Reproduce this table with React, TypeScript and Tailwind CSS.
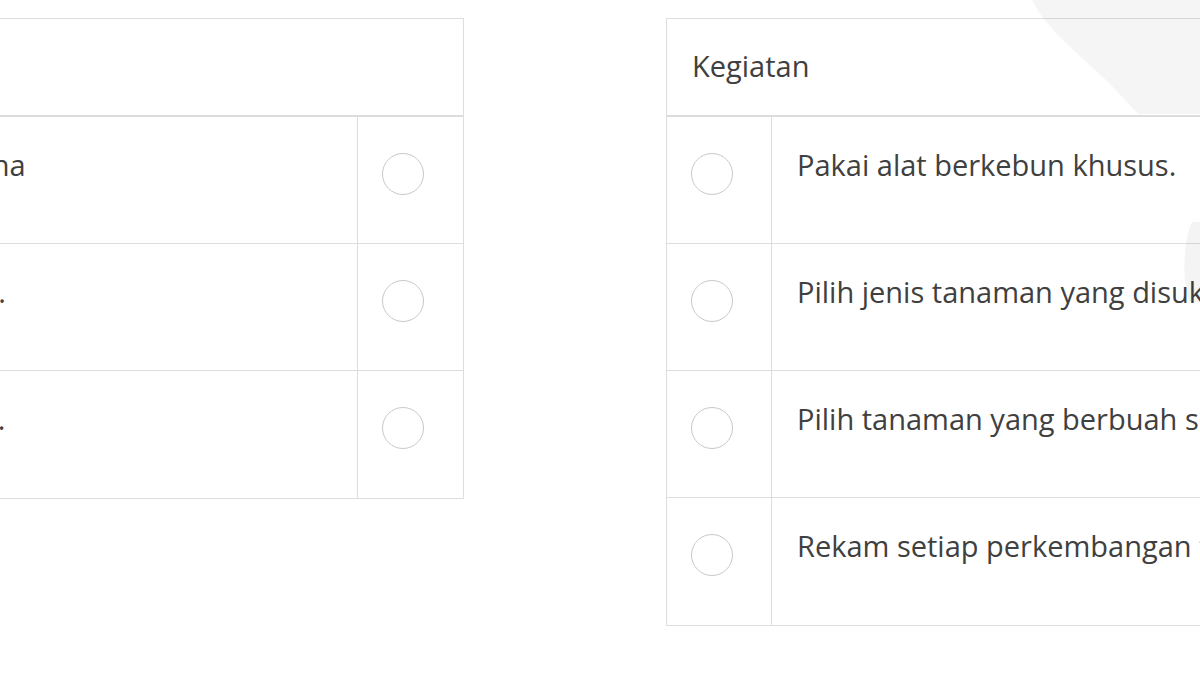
import React from "react";

const leftRows = ["Pot bunga berwarna", "Tanah yang sesuai.", "Pupuk yang cukup."];

const rightRows = [
  "Pakai alat berkebun khusus.",
  "Pilih jenis tanaman yang disukai.",
  "Pilih tanaman yang berbuah sepanjang tahun.",
  "Rekam setiap perkembangan tanaman.",
];

const Radio = () => (
  <span className="block w-[42px] h-[42px] rounded-full border-[1.5px] border-[#c9c9c9] bg-white" />
);

const LeftTable = () => (
  <div className="ml-[-276px] w-[740px] shrink-0 border border-[#dedede] self-start">
    <div className="h-[98px] border-b-2 border-[#dcdcdc] pl-[25px] pt-[26px]">Pilihan</div>
    {leftRows.map((text, i) => (
      <div
        key={i}
        className={`flex h-[127px] ${i < leftRows.length - 1 ? "border-b border-[#dedede]" : ""}`}
      >
        <div className="flex-1 border-r border-[#dedede] pl-[25px] pt-[27px] whitespace-nowrap">
          {text}
        </div>
        <div className="w-[105px] pl-[24px] pt-[36px]">
          <Radio />
        </div>
      </div>
    ))}
  </div>
);

const RightTable = () => (
  <div className="w-[700px] shrink-0 border border-[#dedede] self-start">
    <div className="h-[98px] border-b-2 border-[#dcdcdc] pl-[25px] pt-[26px]">Kegiatan</div>
    {rightRows.map((text, i) => (
      <div
        key={i}
        className={`flex h-[127px] ${i < rightRows.length - 1 ? "border-b border-[#dedede]" : ""}`}
      >
        <div className="w-[105px] shrink-0 border-r border-[#dedede] pl-[24px] pt-[36px]">
          <Radio />
        </div>
        <div className="pl-[25px] pt-[27px] whitespace-nowrap">{text}</div>
      </div>
    ))}
  </div>
);

export default function App() {
  return (
    <div className="relative w-[1200px] h-[675px] overflow-hidden bg-white font-['Open_Sans',sans-serif] text-[29px] leading-[42px] text-[#404040]">
      <div className="flex gap-[202px] pt-[18px]">
        <LeftTable />
        <RightTable />
      </div>
      {/* faint watermark in the corner */}
      <svg
        className="absolute inset-0 pointer-events-none"
        width="1200"
        height="675"
        viewBox="0 0 1200 675"
      >
        <path d="M1032,0 C1045,28 1080,55 1110,84 L1138,114 L1200,114 L1200,0 Z" fill="#000" opacity="0.04" />
        <path d="M1192,222 C1183,240 1182,280 1189,302 L1200,302 L1200,222 Z" fill="#000" opacity="0.045" />
      </svg>
    </div>
  );
}
